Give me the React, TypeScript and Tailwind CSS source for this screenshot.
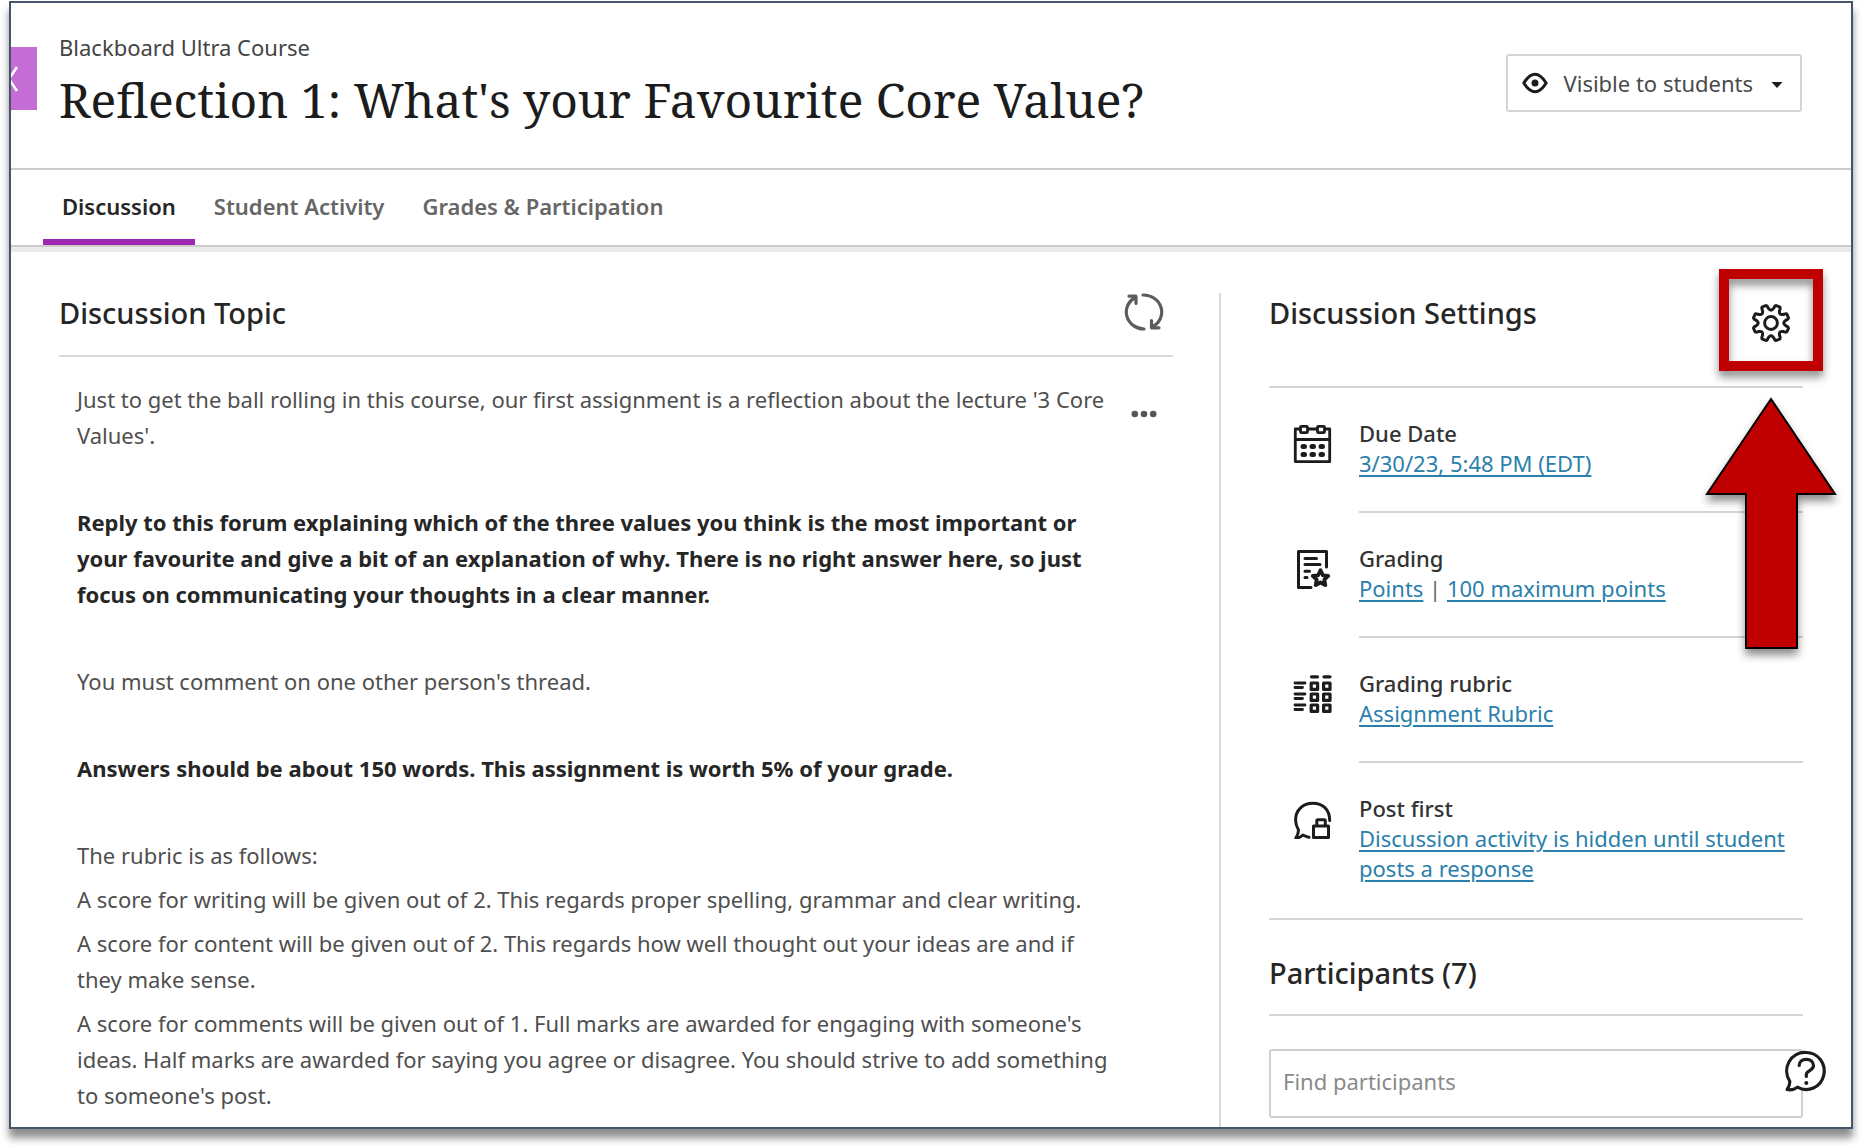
import React from "react";

const sans = "font-['Noto_Sans','Open_Sans',sans-serif]";
const linkClass =
  "text-[#2a80ab] underline decoration-2 underline-offset-[3px]";

function polar(cx: number, cy: number, r: number, deg: number) {
  const a = (deg * Math.PI) / 180;
  return `${(cx + r * Math.sin(a)).toFixed(2)} ${(cy - r * Math.cos(a)).toFixed(2)}`;
}

/* Outline of an eight-tooth cog with rounded valleys. */
function cogPath() {
  let d = "";
  for (let k = 0; k < 8; k++) {
    const c = 22.5 + k * 45;
    const p = (r: number, off: number) => polar(20, 20, r, c + off);
    d += `${k === 0 ? "M" : "L"}${p(14.8, -12.5)}`;
    d += `L${p(17, -10)}Q${p(18.2, -8.5)} ${p(18.2, -5.5)}`;
    d += `L${p(18.2, 5.5)}Q${p(18.2, 8.5)} ${p(17, 10)}`;
    d += `L${p(14.8, 12.5)}Q${p(11, 22.5)} ${p(14.8, 32.5)}`;
  }
  return d + "Z";
}

function starPath(cx: number, cy: number, r: number, inner: number) {
  let d = "";
  for (let k = 0; k < 10; k++) {
    d += (k === 0 ? "M" : "L") + polar(cx, cy, k % 2 ? inner : r, k * 36);
  }
  return d + "Z";
}

function GearIcon() {
  return (
    <svg viewBox="0 0 40 40" className="size-10" fill="none" stroke="#1c1c1c" strokeWidth="3" strokeLinejoin="round" aria-hidden="true">
      <path d={cogPath()} />
      <circle cx="20" cy="20" r="6.4" />
    </svg>
  );
}

function RefreshIcon() {
  return (
    <svg viewBox="0 0 40 38" className="h-[38px] w-10" fill="none" stroke="#5c5c5c" strokeWidth="3.2" strokeLinecap="round" strokeLinejoin="round" aria-hidden="true">
      <path d="M19 2A18.2 17 0 0 1 29 33.500" />
      <path d="M20 36A18.2 17 0 0 1 11 4.500" />
      <path d="M5 3.2H12V10.500" />
      <path d="M27.500 27.500V34.8H35" />
    </svg>
  );
}

function EyeIcon() {
  return (
    <svg viewBox="0 0 26 22" className="h-[22px] w-[26px]" fill="none" stroke="#1c1c1c" strokeWidth="3" strokeLinejoin="round" aria-hidden="true">
      <path d="M1.800 11C4 7.500 8 2.200 13 2.200S22 7.500 24.200 11C22 14.500 18 19.800 13 19.800S4 14.500 1.800 11Z" />
      <circle cx="13" cy="11" r="3.500" fill="#1c1c1c" stroke="none" />
    </svg>
  );
}

function CalendarIcon() {
  return (
    <svg viewBox="0 0 40 40" className="size-10" fill="none" stroke="#1c1c1c" strokeWidth="2.8" strokeLinejoin="round" aria-hidden="true">
      <path d="M7 5H2.300V37.700H36.700V5H32M14 5H25M2.300 15.500H36.700" />
      <rect x="7.500" y="2.300" width="7" height="6.400" rx="1" />
      <rect x="24.500" y="2.300" width="7" height="6.400" rx="1" />
      <path d="M10 22.500h1.500M19 22.500h1.500M28 22.500h1.500M10 30.500h1.500M19 30.500h1.500M28 30.500h1.500" strokeWidth="5" strokeLinecap="round" />
    </svg>
  );
}

function GradingIcon() {
  return (
    <svg viewBox="0 0 40 40" className="size-10" fill="none" stroke="#1c1c1c" strokeWidth="3" strokeLinecap="round" strokeLinejoin="round" aria-hidden="true">
      <path d="M18 38.500H5.500V2.500H33.500V18" />
      <path d="M12 9.500H23.500M12 15.500H27M12 22.300H16.500M12 28.500H14" />
      <path d={starPath(27.500, 29.500, 8.200, 4)} strokeWidth="3.800" />
    </svg>
  );
}

function RubricIcon() {
  const rows = [9, 20, 31];
  return (
    <svg viewBox="0 0 40 40" className="size-10" fill="none" stroke="#1c1c1c" strokeWidth="3.200" strokeLinecap="round" strokeLinejoin="round" aria-hidden="true">
      <path d="M18.500 2.800H24.500M31 2.800H37" />
      {rows.map((y) => (
        <g key={y}>
          <path d={`M2 ${y}H12M2 ${y + 4.5}H9.500`} strokeWidth="2.800" />
          <rect x="18.200" y={y} width="6.400" height="6.400" />
          <rect x="30.600" y={y} width="6.400" height="6.400" />
        </g>
      ))}
    </svg>
  );
}

function PostFirstIcon() {
  return (
    <svg viewBox="0 0 40 40" className="size-10" fill="none" stroke="#1c1c1c" strokeWidth="3" strokeLinecap="round" strokeLinejoin="round" aria-hidden="true">
      <path d="M36.700 21.500C36.700 10 29.500 4.300 19.800 4.300S2.600 11 2.600 21C2.600 25 3.700 28 5.500 31C5.500 34 4.500 36.500 2.800 39C5.500 39 8 38 10 36C12 37 14 38 16 38.300" />
      <rect x="20.500" y="27" width="15" height="11.500" />
      <path d="M23.800 26.500V21.800Q23.800 20.800 24.800 20.800H31.300Q32.300 20.800 32.300 21.800V26.500" />
    </svg>
  );
}

function HelpIcon() {
  return (
    <svg viewBox="0 0 42 42" className="size-[42px]" fill="none" stroke="#1c1c1c" strokeWidth="3.200" strokeLinecap="round" strokeLinejoin="round" aria-hidden="true">
      <path fill="#ffffff" d="M22 2.500A18 18.500 0 1 1 13.500 37.200C10.500 39.300 6.800 40.300 3.200 39.500C5 37 5.900 34.500 5.800 31.300A18.300 18.500 0 0 1 22 2.500Z" />
      <path d="M15.200 15.500C15.200 11.500 18.200 9.300 22.200 9.300S29.500 11.800 29.500 15.800C29.500 20.500 22.300 20.500 22.300 24.500V26.500" />
      <circle cx="22.300" cy="33" r="2" fill="#1c1c1c" stroke="none" />
    </svg>
  );
}

function SettingRow({
  icon,
  title,
  last = false,
  children,
}: {
  icon: React.ReactNode;
  title: string;
  last?: boolean;
  children: React.ReactNode;
}) {
  return (
    <li className="flex">
      <div className="w-[90px] shrink-0 pt-[36px] pl-[24px]">{icon}</div>
      <div
        className={
          last
            ? "flex-1 pt-[30px] pb-[35px]"
            : "flex-1 border-b-2 border-[#d4d4d4] pt-[30px] pb-[33px]"
        }
      >
        <h3 className="text-[22px] leading-[30px] font-medium text-[#333]">{title}</h3>
        <p className="text-[22px] leading-[30px] text-[#666]">{children}</p>
      </div>
    </li>
  );
}

/* Red frame and arrow that point out the settings button. */
function Callout() {
  return (
    <div className="pointer-events-none absolute top-[-24px] left-1/2 flex w-[132px] -translate-x-1/2 flex-col items-center" aria-hidden="true">
      <div className="h-[102px] w-[104px] border-[10px] border-[#c00000] drop-shadow-[0_6px_4px_rgba(0,0,0,0.45)]" />
      <svg viewBox="0 0 132 254" className="mt-[26px] h-[254px] w-[132px] overflow-visible drop-shadow-[0_6px_4px_rgba(0,0,0,0.45)]">
        <path d="M66 2L130 97H92V251H41V97H2Z" fill="#c00000" stroke="#000000" strokeWidth="2" />
      </svg>
    </div>
  );
}

const tabs = ["Discussion", "Student Activity", "Grades & Participation"];

export default function App() {
  return (
    <div className={`bg-white pt-px pr-[9px] pb-4 pl-[9px] text-[#262626] ${sans}`}>
      <div className="relative border-2 border-[#44546a] bg-white shadow-[0_9px_8px_rgba(0,0,0,0.45)]">
        <button type="button" aria-label="Close" className="absolute top-[44px] left-0 flex h-[63px] w-[26px] items-center bg-[#c46dd5]">
          <svg viewBox="0 0 8 28" className="h-7 w-2" fill="none" stroke="#ffffff" strokeWidth="2.500" aria-hidden="true">
            <path d="M6 2L-2 14L6 26" />
          </svg>
        </button>

        <header className="flex items-center justify-between border-b-2 border-[#cccccc] pt-[29px] pr-[49px] pb-[36px] pl-[48px]">
          <div>
            <p className="text-[22px] leading-[30px] text-[#444]">Blackboard Ultra Course</p>
            <h1 className="mt-[6px] font-['Noto_Serif','DejaVu_Serif',serif] text-[48px] leading-[64px] text-[#1c1c1c]">
              Reflection 1: What's your Favourite Core Value?
            </h1>
          </div>
          <button type="button" aria-haspopup="menu" className="mt-[2px] flex h-[58px] items-center rounded-[3px] border-2 border-[#d4d4d4] px-[14px] text-[22px] leading-[30px] text-[#4a4a4a]">
            <EyeIcon />
            <span className="ml-[16px]">Visible to students</span>
            <svg viewBox="0 0 12 8" className="mt-1 mr-[3px] ml-[18px] h-2 w-3" aria-hidden="true">
              <path d="M0.500 1H11.500L6 7Z" fill="#1c1c1c" />
            </svg>
          </button>
        </header>

        <nav className="flex border-b-2 border-[#cccccc] pl-[32px]" role="tablist">
          {tabs.map((tab, i) => (
            <button
              key={tab}
              type="button"
              role="tab"
              aria-selected={i === 0}
              className={
                i === 0
                  ? "border-b-[6px] border-[#9c27b0] px-[19px] pt-[21px] pb-[18px] text-[22px] leading-[30px] font-semibold text-[#262626]"
                  : "border-b-[6px] border-transparent px-[19px] pt-[21px] pb-[18px] text-[22px] leading-[30px] font-semibold text-[#666]"
              }
            >
              {tab}
            </button>
          ))}
        </nav>
        <div className="h-[5px] bg-[#ebebeb]" />

        <div className="grid grid-cols-[1208fr_632fr] pt-[41px]">
          <main className="pr-[46px] pl-[48px]">
            <div className="flex items-start justify-between border-b-2 border-[#d9d9d9] pb-[22px]">
              <h2 className="text-[29px] leading-[40px] font-medium">Discussion Topic</h2>
              <button type="button" aria-label="Refresh" className="flex w-[58px] justify-center">
                <RefreshIcon />
              </button>
            </div>
            <div className="flex items-start pt-[24px] pl-[18px]">
              <div className="flex-1 text-[22px] leading-[36px] text-[#4f4f4f]">
                <p className="mb-[51px]">
                  Just to get the ball rolling in this course, our first assignment is a reflection about the lecture '3 Core Values'.
                </p>
                <p className="mb-[51px] font-bold text-[#262626]">
                  Reply to this forum explaining which of the three values you think is the most important or your favourite and give a bit of an explanation of why. There is no right answer here, so just focus on communicating your thoughts in a clear manner.
                </p>
                <p className="mb-[51px]">You must comment on one other person's thread.</p>
                <p className="mb-[51px] font-bold text-[#262626]">
                  Answers should be about 150 words. This assignment is worth 5% of your grade.
                </p>
                <p className="mb-[8px]">The rubric is as follows:</p>
                <p className="mb-[8px]">
                  A score for writing will be given out of 2. This regards proper spelling, grammar and clear writing.
                </p>
                <p className="mb-[8px]">
                  A score for content will be given out of 2. This regards how well thought out your ideas are and if they make sense.
                </p>
                <p>
                  A score for comments will be given out of 1. Full marks are awarded for engaging with someone's ideas. Half marks are awarded for saying you agree or disagree. You should strive to add something to someone's post.
                </p>
              </div>
              <button type="button" aria-label="More options" className="flex h-[66px] w-[58px] items-center justify-center">
                <svg viewBox="0 0 26 8" className="h-2 w-[26px]" fill="#555555" aria-hidden="true">
                  <circle cx="3.800" cy="4" r="3.300" />
                  <circle cx="13" cy="4" r="3.300" />
                  <circle cx="22.200" cy="4" r="3.300" />
                </svg>
              </button>
            </div>
          </main>

          <aside className="border-l-2 border-[#d9d9d9] pr-[48px] pb-[9px] pl-[48px]">
            <div className="flex items-start justify-between border-b-2 border-[#d4d4d4] pb-[33px]">
              <h2 className="text-[29px] leading-[40px] font-medium">Discussion Settings</h2>
              <div className="relative">
                <button type="button" aria-label="Discussion settings" className="flex h-[60px] w-[64px] items-center justify-center">
                  <GearIcon />
                </button>
                <Callout />
              </div>
            </div>

            <ul className="border-b-2 border-[#d4d4d4]">
              <SettingRow icon={<CalendarIcon />} title="Due Date">
                <a href="#due-date" className={linkClass}>3/30/23, 5:48 PM (EDT)</a>
              </SettingRow>
              <SettingRow icon={<GradingIcon />} title="Grading">
                <a href="#points" className={linkClass}>Points</a> |{" "}
                <a href="#maximum-points" className={linkClass}>100 maximum points</a>
              </SettingRow>
              <SettingRow icon={<RubricIcon />} title="Grading rubric">
                <a href="#rubric" className={linkClass}>Assignment Rubric</a>
              </SettingRow>
              <SettingRow icon={<PostFirstIcon />} title="Post first" last>
                <a href="#post-first" className={linkClass}>
                  Discussion activity is hidden until student posts a response
                </a>
              </SettingRow>
            </ul>

            <h2 className="border-b-2 border-[#d4d4d4] pt-[33px] pb-[21px] text-[29px] leading-[40px] font-medium">
              Participants (7)
            </h2>
            <input
              type="text"
              aria-label="Find participants"
              placeholder="Find participants"
              className="mt-[33px] h-[69px] w-full rounded-[3px] border-2 border-[#d0d0d0] px-[12px] pb-[6px] text-[22px] leading-[30px] placeholder:text-[#8a8a8a]"
            />
          </aside>
        </div>

        <button type="button" aria-label="Help" className="absolute right-[25px] bottom-[35px]">
          <HelpIcon />
        </button>
      </div>
    </div>
  );
}
